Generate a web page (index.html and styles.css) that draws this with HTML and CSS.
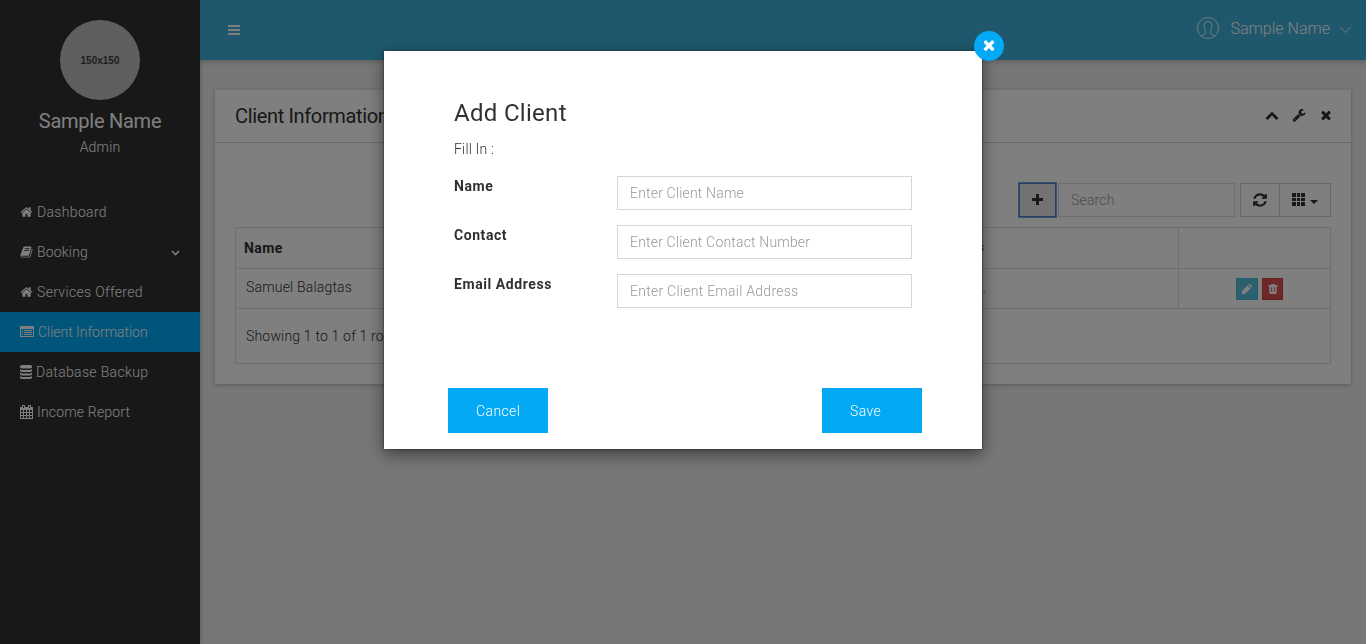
FILE: index.html
```html
<!DOCTYPE html>
<html lang="en">
<head>
<meta charset="utf-8">
<title>Client Information</title>
<link rel="stylesheet" href="styles.css">
</head>
<body>
<svg class="sprite" aria-hidden="true">
  <symbol id="home" viewBox="0 0 1792 1792"><path d="M1472 992v480q0 26-19 45t-45 19h-384v-384h-256v384h-384q-26 0-45-19t-19-45v-480q0-1 .5-3t.5-3l575-474 575 474q1 2 1 6zm223-69l-62 74q-8 9-21 11h-3q-13 0-21-7l-692-577-692 577q-12 8-24 7-13-2-21-11l-62-74q-8-10-7-23.500t11-21.500l719-599q32-26 76-26t76 26l244 204v-195q0-14 9-23t23-9h192q14 0 23 9t9 23v408l219 182q10 8 11 21.500t-7 23.500z"/></symbol>
  <symbol id="close" viewBox="0 0 1792 1792"><path d="M1490 1322q0 40-28 68l-136 136q-28 28-68 28t-68-28l-294-294-294 294q-28 28-68 28t-68-28l-136-136q-28-28-28-68t28-68l294-294-294-294q-28-28-28-68t28-68l136-136q28-28 68-28t68 28l294 294 294-294q28-28 68-28t68 28l136 136q28 28 28 68t-28 68l-294 294 294 294q28 28 28 68z"/></symbol>
</svg>
<div class="app">
  <aside class="sidebar">
    <div class="profile">
      <div class="avatar">150x150</div>
      <div class="profile-name">Sample Name</div>
      <div class="profile-role">Admin</div>
    </div>
    <nav class="menu">
      <a class="item"><svg class="ico"><use href="#home"/></svg><span class="loose">Dashboard</span></a>
      <a class="item"><svg class="ico" viewBox="0 0 1792 1792"><path d="M1703 478q40 57 18 129l-275 906q-19 64-76.500 107.500t-122.500 43.500h-923q-77 0-148.500-53.500t-99.500-131.500q-24-67-2-127 0-4 3-27t4-37q1-8-3-21.500t-3-19.500q2-11 8-21t16.500-23.500 16.500-23.500q23-38 45-91.500t30-91.500q3-10 .5-30t-.5-28q3-11 17-28t17-23q21-36 42-92t25-90q1-9-2.500-32t.5-28q4-13 22-30.500t22-22.500q19-26 42.500-84.500t27.500-96.500q1-8-3-25.500t-2-26.500q2-8 9-18t18-23 17-21q8-12 16.500-30.500t15-35 16-36 19.500-32 26.500-23.500 36-11.500 47.500 5.500l-1 3q38-9 51-9h761q74 0 114 56t18 130l-274 906q-36 119-71.500 153.500t-128.500 34.500h-869q-27 0-38 15-11 16-1 43 24 70 144 70h923q29 0 56-15.500t35-41.500l300-987q7-22 5-57 38 15 59 43zm-1064 2q-4 13 2 22.500t20 9.500h608q13 0 25.500-9.500t16.500-22.500l21-64q4-13-2-22.500t-20-9.500h-608q-13 0-25.500 9.500t-16.500 22.500zm-83 256q-4 13 2 22.500t20 9.500h608q13 0 25.500-9.500t16.500-22.500l21-64q4-13-2-22.500t-20-9.500h-608q-13 0-25.500 9.500t-16.500 22.500z"/></svg><span>Booking</span>
        <svg class="arrow" viewBox="0 0 9 6"><path d="M1 1l3.500 3.500L8 1" fill="none" stroke="currentColor" stroke-width="1.600"/></svg></a>
      <a class="item"><svg class="ico"><use href="#home"/></svg><span class="loose">Services Offered</span></a>
      <a class="item active"><svg class="ico" viewBox="0 0 14 14"><path fill-rule="evenodd" d="M0 1h14v11H0zM1 4v7h12V4zM2 5h1v1H2zM4 5h8v1H4zM2 7h1v1H2zM4 7h8v1H4zM2 9h1v1H2zM4 9h8v1H4z"/></svg><span class="tight">Client Information</span></a>
      <a class="item db"><svg class="ico" viewBox="0 0 12 14"><path d="M1.500 0h9L12 1v1.500l-1.500 1h-9L0 2.500V1zM0 4l1.500 1h9L12 4v2L10.500 7h-9L0 6zM0 7.500l1.500 1h9l1.500-1v2l-1.500 1h-9L0 9.500zM0 11l1.500 1h9l1.500-1v2l-1.500 1h-9L0 13z"/></svg><span class="loose">Database Backup</span></a>
      <a class="item"><svg class="ico" viewBox="0 0 13 14"><path fill-rule="evenodd" d="M0 2h2V0h3v2h3V0h3v2h2v12H0zM3 1v2h1V1zM9 1v2h1V1zM1 5v2h2V5zM4 5v2h2V5zM7 5v2h2V5zM10 5v2h2V5zM1 8v2h2V8zM4 8v2h2V8zM7 8v2h2V8zM10 8v2h2V8zM1 11v2h2v-2zM4 11v2h2v-2zM7 11v2h2v-2zM10 11v2h2v-2z"/></svg><span>Income Report</span></a>
    </nav>
  </aside>
  <div class="main">
    <header class="topbar">
      <svg class="burger" viewBox="0 0 12 10"><path d="M0 0h12v2H0zM0 4h12v2H0zM0 8h12v2H0z"/></svg>
      <div class="user">
        <svg class="user-ico line" viewBox="0 0 22 22"><circle cx="11" cy="11" r="10.500"/><path d="M5 19.500c0-1.500.5-1.500 2-2s1.500-1 1.500-2.500c0-1.500-1.500-2.500-1.500-6 0-3 1.500-4.500 4-4.500S15 6 15 9c0 3.500-1.500 4.500-1.500 6 0 1.500 0 2 1.500 2.500s2 .5 2 2"/></svg>
        <span>Sample Name</span>
        <svg class="user-arrow line" viewBox="0 0 11 6"><path d="M.5.500l5 5 5-5"/></svg>
      </div>
    </header>
    <section class="card">
      <div class="card-head">
        <h1>Client Information</h1>
        <div class="tools">
          <svg viewBox="0 0 1792 1792"><path d="M1683 1331l-166 165q-19 19-45 19t-45-19l-531-531-531 531q-19 19-45 19t-45-19l-166-165q-19-19-19-45.500t19-45.500l742-741q19-19 45-19t45 19l742 741q19 19 19 45.500t-19 45.500z"/></svg>
          <svg viewBox="0 0 1792 1792"><path d="M448 1472q0-26-19-45t-45-19-45 19-19 45 19 45 45 19 45-19 19-45zm644-420l-682 682q-37 37-90 37-52 0-91-37l-106-108q-38-36-38-90 0-53 38-91l681-681q39 98 114.500 173.500t173.500 114.500zm634-435q0 39-23 106-47 134-164.500 217.500t-258.500 83.500q-185 0-316.500-131.500t-131.500-316.500 131.500-316.500 316.500-131.500q58 0 121.500 16.500t107.500 46.500q16 11 16 28t-16 28l-293 169v224l193 107q5-3 79-48.500t135.500-81 70.500-35.500q15 0 23.500 10t8.500 25z"/></svg>
          <svg><use href="#close"/></svg>
        </div>
      </div>
      <div class="toolbar">
        <button class="btn add"><svg viewBox="0 0 11 11"><path d="M4 0h3v4h4v3H7v4H4V7H0V4h4z"/></svg></button>
        <input class="search" placeholder="Search">
        <div class="group">
          <button class="btn refresh"><svg viewBox="0 0 1792 1792"><path d="M1639 1056q0 5-1 7-64 268-268 434.500t-478 166.500q-146 0-282.500-55t-243.500-157l-129 129q-19 19-45 19t-45-19-19-45v-448q0-26 19-45t45-19h448q26 0 45 19t19 45-19 45l-137 137q71 66 161 102t187 36q134 0 250-65t186-179q11-17 53-117 8-23 30-23h192q13 0 22.500 9.500t9.500 22.500zm25-800v448q0 26-19 45t-45 19h-448q-26 0-45-19t-19-45 19-45l138-138q-148-137-349-137-134 0-250 65t-186 179q-11 17-53 117-8 23-30 23h-199q-13 0-22.500-9.500t-9.500-22.500v-7q65-268 270-434.500t480-166.500q146 0 284 55.500t245 156.500l130-129q19-19 45-19t45 19 19 45z"/></svg></button>
          <button class="btn cols"><svg class="grid-ico" viewBox="0 0 13 13"><path d="M0 0h4v4H0zM5 0h3v4H5zM9 0h4v4H9zM0 5h4v3H0zM5 5h3v3H5zM9 5h4v3H9zM0 9h4v4H0zM5 9h3v4H5zM9 9h4v4H9z"/></svg><svg class="caret" viewBox="0 0 8 4"><path d="M0 0h8L4 4z"/></svg></button>
        </div>
      </div>
      <div class="table">
        <div class="row head"><div class="c-name">Name</div><div class="c-addr"><span>Address</span></div><div class="c-act"></div></div>
        <div class="row"><div class="c-name">Samuel Balagtas</div><div class="c-addr"><span>.</span></div>
          <div class="c-act">
            <button class="mini edit"><svg viewBox="0 0 10 10"><path d="M0 10V7l5.500-5.500 3 3L3 10zM6.200.800L7 0h1l2 2v1l-.8.800z"/></svg></button>
            <button class="mini del"><svg viewBox="0 0 10 11"><path fill-rule="evenodd" d="M0 1h3V0h4v1h3v2H9v7L8 11H2L1 10V3H0zM3 3.500v5h1v-5zM6 3.500v5h1v-5z"/></svg></button>
          </div></div>
        <div class="row foot">Showing 1 to 1 of 1 rows</div>
      </div>
    </section>
  </div>
</div>
<div class="overlay"></div>
<div class="modal">
  <button class="modal-close"><svg><use href="#close"/></svg></button>
  <h2>Add Client</h2>
  <p>Fill In :</p>
  <div class="field"><label>Name</label><input placeholder="Enter Client Name"></div>
  <div class="field"><label>Contact</label><input placeholder="Enter Client Contact Number"></div>
  <div class="field"><label>Email Address</label><input class="wide" placeholder="Enter Client Email Address"></div>
  <div class="actions"><button>Cancel</button><button>Save</button></div>
</div>
</body>
</html>
```
FILE: styles.css
```css
* { box-sizing: border-box; }
body { margin: 0; height: 644px; overflow: hidden; background: #eee; color: #313131; font: 300 14px/20px Roboto, sans-serif; letter-spacing: .18px; }
button, input { font: inherit; letter-spacing: inherit; border-radius: 0; padding: 0; }
svg { fill: currentColor; display: block; flex: none; overflow: visible; }
.line { fill: none; stroke: currentColor; stroke-width: .9; }
.sprite { position: absolute; width: 0; height: 0; }
.app { display: flex; height: 644px; }
.sidebar { width: 200px; background: #313131; color: #fff; box-shadow: 0 0 4px rgba(0,0,0,.3); }
.profile { height: 192px; padding-top: 20px; display: flex; flex-direction: column; align-items: center; }
.avatar { width: 80px; height: 80px; border-radius: 50%; background: #bfbfbf; color: #3a3a3a; font: bold 10px/81px "Liberation Sans", sans-serif; text-align: center; letter-spacing: 0; }
.profile-name { font-size: 20px; font-weight: 400; line-height: 24px; margin-top: 9px; letter-spacing: -.25px; }
.profile-role { margin-top: 4px; }
.item { height: 40px; padding-left: 20px; display: flex; align-items: center; gap: 4px; }
.loose { letter-spacing: .33px; }
.tight { letter-spacing: -.02px; }
.ico { width: 13px; height: 14px; }
.active { background: #03a9f4; }
.active .ico { width: 14px; }
.db .ico { width: 12px; }
.arrow { width: 9px; height: 6px; margin: 1px 20px 0 auto; }
.main { flex: 1; }
.topbar { height: 60px; background: #3eb0d8; color: #fff; display: flex; justify-content: space-between; align-items: center; padding: 0 15px 0 28px; box-shadow: 0 2px 5px rgba(0,0,0,.2); }
.burger { width: 12px; height: 10px; }
.user { display: flex; align-items: center; font-size: 16px; margin-top: -3px; letter-spacing: .02px; }
.user-ico { width: 22px; height: 22px; margin: -1px 11px 0 0; }
.user-arrow { width: 11px; height: 6px; margin: 2px 0 0 10px; }
.card { margin: 30px 15px 0; height: 294px; background: #fff; box-shadow: 0 1px 4px rgba(0,0,0,.25); }
.card-head { height: 53px; border-bottom: 1px solid #d0d0d0; padding: 0 20px; display: flex; justify-content: space-between; align-items: center; }
h1 { margin: 0; font-size: 20px; font-weight: 400; letter-spacing: -.35px; }
.tools { display: flex; gap: 13px; align-items: center; margin-top: -2px; }
.tools svg { width: 14px; height: 14px; }
.tools svg:last-child { margin: 0 -1.500px 0 -.5px; }
.toolbar { display: flex; justify-content: flex-end; margin: 40px 20px 0; height: 34px; }
.btn { border: 1px solid #ccc; background: #fff; color: #313131; display: flex; align-items: center; justify-content: center; height: 34px; }
.add { width: 37px; background: #e6e6e6; border-color: #4d7dc4; box-shadow: 0 0 0 1px #7ba4e4; margin-right: 2px; }
.add svg { width: 11px; height: 11px; margin-top: -1px; }
.search { width: 177px; border: 1px solid #ddd; background: #fff; padding: 0 12px; margin-right: 5px; }
::placeholder { color: #999; opacity: 1; }
.group { display: flex; }
.refresh { width: 40px; }
.refresh svg { width: 16px; height: 16px; margin-top: -1px; }
.cols { width: 52px; margin-left: -1px; gap: 5px; }
.grid-ico { width: 13px; height: 13px; margin-top: -1px; }
.caret { width: 8px; height: 4px; margin-top: 4px; }
.table { margin: 10px 20px 0; border: 1px solid #ddd; height: 137px; }
.row { display: grid; grid-template-columns: 500px 1fr 151px; height: 40px; align-items: center; border-bottom: 1px solid #ddd; }
.row.head { height: 41px; font-weight: 700; letter-spacing: .4px; }
.row.foot { display: flex; padding: 0 0 2px 10px; height: 55px; border: 0; }
.c-name { padding-left: 10px; padding-bottom: 3px; }
.head .c-name { padding-left: 8px; padding-bottom: 0; }
.c-addr { height: 100%; border-right: 1px solid #ddd; padding-right: 192px; text-align: right; line-height: 38px; }
.head .c-addr { padding-right: 194px; }
.c-act { display: flex; justify-content: center; gap: 4px; padding-left: 10px; }
.mini { width: 22px; height: 22px; color: #fff; border: 1px solid #46b8da; background: #5bc0de; display: flex; align-items: center; justify-content: center; }
.mini svg { width: 10px; height: 10px; }
.del { width: 21px; background: #d9534f; border-color: #d43f3a; }
.overlay { position: fixed; inset: 0; background: rgba(0,0,0,.5); }
.modal { position: absolute; left: 384px; top: 51px; width: 598px; height: 398px; background: #fff; padding: 49px 70px 0; box-shadow: 0 5px 15px rgba(0,0,0,.5), 0 0 2px #333; }
.modal-close { position: absolute; right: -22px; top: -20px; width: 30px; height: 30px; border: 0; border-radius: 50%; background: #03a9f4; color: #fff; display: flex; align-items: center; justify-content: center; }
.modal-close svg { width: 16px; height: 16px; margin-top: -2px; }
h2 { margin: 0; font-size: 24px; font-weight: 400; line-height: 26px; letter-spacing: .3px; }
.modal p { margin: 13px 0 17px; }
.field { display: flex; justify-content: space-between; height: 34px; margin-bottom: 15px; }
.field label { font-weight: 700; letter-spacing: .57px; }
.field input { width: 295px; border: 1px solid #d6d6d6; padding: 0 12px; color: #555; }
.field .wide { letter-spacing: .26px; }
.actions { display: flex; justify-content: space-between; margin: 80px -10px 0 -6px; }
.actions button { width: 100px; height: 45px; border: 0; padding-left: 28px; text-align: left; background: #03a9f4; color: #fff; letter-spacing: .4px; }
```
